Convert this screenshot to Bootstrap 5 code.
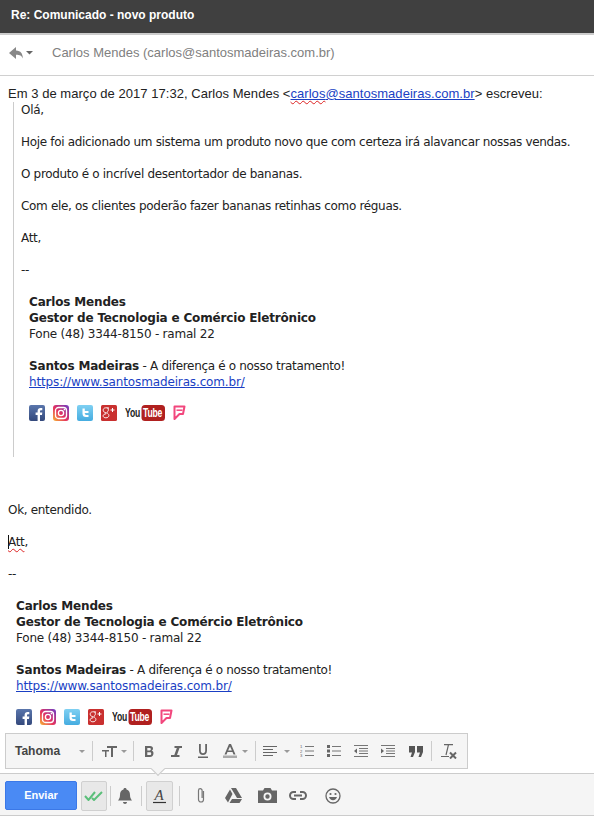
<!DOCTYPE html>
<html lang="pt">
<head>
<meta charset="UTF-8">
<title>Re: Comunicado - novo produto</title>
<link href="https://cdn.jsdelivr.net/npm/bootstrap@5.3.3/dist/css/bootstrap.min.css" rel="stylesheet">
<style>
html, body { height: 100%; }
body { font-family: "Liberation Sans", Arial, sans-serif; overflow: hidden; background: #fff; }
.topo { height: 35px; background: #404040; border-bottom: 2px solid #ccc; color: #fff; font-size: 12px; font-weight: 700; padding-left: 11px; line-height: 30px; }
.resposta { height: 41px; border-bottom: 1px solid #d0d0d0; padding: 0 0 4px 9px; color: #808080; font-size: 13px; }
.resposta .nome-from { margin-left: 15px; }
.corpo { flex: 1 1 auto; min-height: 0; overflow: hidden; font-family: "DejaVu Sans", sans-serif; font-size: 12px; line-height: 16px; color: #222; padding: 9px 0 0 8px; letter-spacing: -.32px; }
.cab-citacao { font-family: "Liberation Sans", Arial, sans-serif; font-size: 13px; letter-spacing: .04px; height: 17px; line-height: 18px; }
.corpo a { color: #1a3fc4; }
.sublinha-erro { text-decoration: underline wavy #d22; text-underline-offset: 2px; text-decoration-thickness: 1px; }
.citacao { margin-left: 5px; border-left: 1px solid #ccc; padding: 0 0 0 7px; height: 355px; margin-bottom: 45px; }
.corpo p { margin: 0 0 16px; }
.assinatura { padding-left: 8px; }
.assinatura b { font-size: 12px; letter-spacing: -.17px; }
.linha-fone { letter-spacing: -.22px; }
.assinatura a { letter-spacing: -.14px; }
.redes { height: 18px; margin-top: 14px; gap: 8px; }
.cursor-texto { border-left: 1px solid #111; margin-right: -1px; }
.barra-formato { position: absolute; left: 5px; top: 733px; width: 463px; height: 36px; background: #f5f5f5; border: 1px solid #ccc; z-index: 3; padding-left: 9px; color: #666; }
.barra-formato .fonte { width: 42px; font-size: 12px; font-weight: 700; color: #444; }
.seta-barra { position: absolute; left: 153px; top: 764px; width: 10px; height: 10px; background: #f5f5f5; border-right: 1px solid #ccc; border-bottom: 1px solid #ccc; transform: rotate(45deg); z-index: 4; }
.barra-envio { height: 43px; flex: none; background: #f5f5f5; border-top: 1px solid #ccc; border-bottom: 1px solid #ccc; padding: 2px 0 0 5px; }
.btn-enviar { width: 72px; height: 29px; padding: 0; background: #4a8af4; border: 1px solid #3b78e7; border-radius: 2px; color: #fff; font-size: 11px; font-weight: 700; }
.alternar { width: 26px; height: 30px; background: #e8e8e8; border: 1px solid #d0d0d0; border-radius: 2px; }
.alternar-largo { width: 27px; }
.sep { width: 1px; height: 20px; background: #ccc; flex: none; }
.icone-fmt { flex: none; display: block; }
.caret-fmt { width: 0; height: 0; border-left: 3.5px solid transparent; border-right: 3.5px solid transparent; border-top: 3.5px solid #999; flex: none; }
.esq-3 { margin-left: 3px; }
.esq-4 { margin-left: 4px; }
.esq-5 { margin-left: 5px; }
.esq-6 { margin-left: 6px; }
.esq-7 { margin-left: 7px; }
.esq-8 { margin-left: 8px; }
.esq-9 { margin-left: 9px; }
.esq-10 { margin-left: 10px; }
.esq-12 { margin-left: 12px; }
.esq-13 { margin-left: 13px; }
.esq-14 { margin-left: 14px; }
.esq-15 { margin-left: 15px; }
.esq-16 { margin-left: 16px; }
.esq-18 { margin-left: 18px; }
.esq-19 { margin-left: 19px; }
.esq-22 { margin-left: 22px; }
.txt-yt { font-family: "Liberation Sans", Arial, sans-serif; font-size: 12px; font-weight: 700; }
.txt-lista { font-family: "Liberation Sans", Arial, sans-serif; font-size: 4.2px; fill: #666; }
</style>
</head>
<body class="d-flex flex-column">

<svg width="0" height="0" class="position-absolute">
  <defs>
    <linearGradient id="gFace" x1="0" y1="0" x2="0" y2="1"><stop offset="0" stop-color="#5a76ac"/><stop offset="1" stop-color="#34497c"/></linearGradient>
    <linearGradient id="gTwit" x1="0" y1="0" x2="0" y2="1"><stop offset="0" stop-color="#7fd0f2"/><stop offset="1" stop-color="#45ace0"/></linearGradient>
    <linearGradient id="gInsta" x1="0" y1="1" x2="1" y2="0"><stop offset="0" stop-color="#f7b733"/><stop offset=".45" stop-color="#e5305f"/><stop offset="1" stop-color="#6a3fc8"/></linearGradient>
    <symbol id="i-face" viewBox="0 0 16 16"><rect width="16" height="16" rx="2" fill="url(#gFace)"/><path d="M11 16V10h2l.3-2.4H11V6.300c0-.7.3-1.100 1.100-1.100h1.200V3c-.4 0-1-.1-1.700-.1-1.800 0-3 1.100-3 3v1.700h-2V10h2v6z" fill="#fff"/></symbol>
    <symbol id="i-insta" viewBox="0 0 16 16"><rect width="16" height="16" rx="3" fill="url(#gInsta)"/><rect x="2.500" y="2.500" width="11" height="11" rx="3" fill="none" stroke="#fff" stroke-width="1.300"/><circle cx="8" cy="8" r="2.600" fill="none" stroke="#fff" stroke-width="1.300"/><circle cx="11.400" cy="4.600" r=".8" fill="#fff"/></symbol>
    <symbol id="i-twit" viewBox="0 0 16 16"><rect width="16" height="16" rx="2" fill="url(#gTwit)"/><path d="M5.500 3.500v5.200c0 2 1.200 3.300 3.400 3.300h2.600v-2H9.300c-1 0-1.500-.5-1.500-1.400V8h3.700V6H7.800V3.500z" fill="#fff"/></symbol>
    <symbol id="i-gplus" viewBox="0 0 16 16"><rect width="16" height="16" rx="1.500" fill="#c9302f"/><path d="M7.600 2.800H4.700C3 2.800 2.200 4 2.200 5.200c0 1.300 1 2.300 2.400 2.300l.4 0c-.2.500-.1.900.2 1.300-1.800.1-3.100.8-3.100 2.100 0 1.200 1.200 1.900 2.800 1.900 1.900 0 3-1.100 3-2.300 0-1.800-1.900-2.100-1.900-3 0-.8 1.400-1.100 1.400-2.600 0-.7-.3-1.200-.7-1.500h.8z" fill="none" stroke="#fff" stroke-width=".9"/><path d="M11.500 3v4M9.500 5h4" stroke="#fff" stroke-width="1"/></symbol>
    <symbol id="i-yt" viewBox="0 0 40 16"><g transform="scale(.72 1)"><text x="0" y="12.500" class="txt-yt" fill="#222">You</text></g><rect x="16.500" y="0" width="23.500" height="16" rx="3.500" fill="#b0201f"/><g transform="scale(.72 1)"><text x="25" y="12.500" class="txt-yt" fill="#fff">Tube</text></g></symbol>
    <symbol id="i-four" viewBox="0 0 13 16"><path d="M1.500 1.500h10L10 9H6.500L1.500 14z" fill="none" stroke="#f2477d" stroke-width="2" stroke-linejoin="round"/><path d="M3.500 5.200h6" stroke="#f2477d" stroke-width="1.500"/></symbol>
  </defs>
</svg>

<div class="topo flex-shrink-0">Re: Comunicado - novo produto</div>

<div class="resposta d-flex align-items-center flex-shrink-0">
  <svg width="28" height="14" viewBox="0 0 28 14"><path d="M0 7l7-6v3.500c5 .3 6.500 3 7 8-1.500-2.700-3-3.700-7-3.700V13z" fill="#888"/><path d="M17 5h7l-3.500 3.500z" fill="#666"/></svg>
  <span class="nome-from">Carlos Mendes (carlos@santosmadeiras.com.br)</span>
</div>

<div class="corpo">
  <div class="cab-citacao">Em 3 de março de 2017 17:32, Carlos Mendes &lt;<a href="#"><span class="sublinha-erro">carlos</span>@santosmadeiras.com.br</a>&gt; escreveu:</div>
  <div class="citacao">
    <p>Olá,</p>
    <p>Hoje foi adicionado um sistema um produto novo que com certeza irá alavancar nossas vendas.</p>
    <p>O produto é o incrível desentortador de bananas.</p>
    <p>Com ele, os clientes poderão fazer bananas retinhas como réguas.</p>
    <p>Att,</p>
    <p>--</p>
    <div class="assinatura">
      <b>Carlos Mendes</b><br>
      <b>Gestor de Tecnologia e Comércio Eletrônico</b><br>
      <span class="linha-fone">Fone (48) 3344-8150 - ramal 22</span><br><br>
      <b>Santos Madeiras</b> - A diferença é o nosso tratamento!<br>
      <a href="#">https://www.santosmadeiras.com.br/</a>
      <div class="redes d-flex align-items-center">
        <svg width="16" height="16"><use href="#i-face"/></svg>
        <svg width="16" height="16"><use href="#i-insta"/></svg>
        <svg width="16" height="16"><use href="#i-twit"/></svg>
        <svg width="16" height="16"><use href="#i-gplus"/></svg>
        <svg width="40" height="16"><use href="#i-yt"/></svg>
        <svg width="13" height="16"><use href="#i-four"/></svg>
      </div>
    </div>
  </div>
  <p>Ok, entendido.</p>
  <p><span class="cursor-texto"></span><span class="sublinha-erro">Att</span>,</p>
  <p>--</p>
  <div class="assinatura">
    <b>Carlos Mendes</b><br>
    <b>Gestor de Tecnologia e Comércio Eletrônico</b><br>
    <span class="linha-fone">Fone (48) 3344-8150 - ramal 22</span><br><br>
    <b>Santos Madeiras</b> - A diferença é o nosso tratamento!<br>
    <a href="#">https://www.santosmadeiras.com.br/</a>
    <div class="redes d-flex align-items-center">
      <svg width="16" height="16"><use href="#i-face"/></svg>
      <svg width="16" height="16"><use href="#i-insta"/></svg>
      <svg width="16" height="16"><use href="#i-twit"/></svg>
      <svg width="16" height="16"><use href="#i-gplus"/></svg>
      <svg width="40" height="16"><use href="#i-yt"/></svg>
      <svg width="13" height="16"><use href="#i-four"/></svg>
    </div>
  </div>
</div>

<div class="barra-formato d-flex align-items-center">
  <span class="fonte">Tahoma</span>
  <span class="caret-fmt esq-22"></span>
  <span class="sep esq-7"></span>
  <svg class="icone-fmt esq-9" width="16" height="11" viewBox="0 0 16 11"><path d="M5 0h10v2h-4v9H9V2H5zM0 4h7v1.500H4.500V11H3V5.500H0z" fill="#666"/></svg>
  <span class="caret-fmt esq-3"></span>
  <span class="sep esq-6"></span>
  <svg class="icone-fmt esq-9" width="12" height="11" viewBox="0 0 12 11"><path fill-rule="evenodd" d="M2 0h5c2 0 3 1 3 2.600 0 .9-.5 1.600-1.300 2 1.100.4 1.800 1.300 1.800 2.600 0 2.300-1.500 3.800-3.500 3.800H2zm2.300 1.900v2.500h2.400c.8 0 1.100-.4 1.100-1.200s-.4-1.300-1.100-1.300zm0 4.400v2.800h2.600c1 0 1.300-.5 1.300-1.400s-.5-1.400-1.400-1.400z" fill="#666"/></svg>
  <svg class="icone-fmt esq-15" width="12" height="11" viewBox="0 0 12 11"><path d="M4.500 0H12v2H9.500L7 9h2.500v2H1V9h3.300l2.500-7H4.500z" fill="#666"/></svg>
  <svg class="icone-fmt esq-15" width="12" height="14" viewBox="0 0 12 14"><path d="M2 0v6.500c0 3 1.600 4.500 4 4.500s4-1.500 4-4.500V0H8.200v6.500c0 1.800-.8 2.700-2.200 2.700s-2.200-.9-2.200-2.700V0zM1 12.500h10V14H1z" fill="#666"/></svg>
  <svg class="icone-fmt esq-14" width="14" height="14" viewBox="0 0 14 14"><path fill-rule="evenodd" d="M6 0h2l4.500 10.500h-2l-1-2.500H4.500l-1 2.500h-2zm1 2.500L5.100 6.500h3.800z" fill="#666"/><rect y="11.500" width="14" height="2.500" fill="#aaa"/></svg>
  <span class="caret-fmt esq-5"></span>
  <span class="sep esq-7"></span>
  <svg class="icone-fmt esq-7" width="14" height="11" viewBox="0 0 14 11"><path d="M0 .5h14M0 3.500h10M0 6.500h14M0 9.500h10" stroke="#666" stroke-width="1"/></svg>
  <span class="caret-fmt esq-7"></span>
  <svg class="icone-fmt esq-10" width="14" height="14" viewBox="0 0 14 14"><text x="0" y="4" class="txt-lista">1</text><text x="0" y="8.700" class="txt-lista">2</text><text x="0" y="13.400" class="txt-lista">3</text><path d="M5 2.500h9M5 7h9M5 11.500h9" stroke="#777" stroke-width="1"/></svg>
  <svg class="icone-fmt esq-13" width="14" height="12" viewBox="0 0 14 12"><rect width="3" height="3" fill="#666"/><rect y="4.500" width="3" height="3" fill="#666"/><rect y="9" width="3" height="3" fill="#666"/><path d="M5 1.500h9M5 6h9M5 10.500h9" stroke="#777" stroke-width="1"/></svg>
  <svg class="icone-fmt esq-13" width="14" height="12" viewBox="0 0 14 12"><path d="M0 .5h14M5 3.500h9M5 6h9M5 8.500h9M0 11.500h14" stroke="#777" stroke-width="1"/><path d="M3 3.500v5L0 6z" fill="#666"/></svg>
  <svg class="icone-fmt esq-13" width="14" height="12" viewBox="0 0 14 12"><path d="M0 .5h14M5 3.500h9M5 6h9M5 8.500h9M0 11.500h14" stroke="#777" stroke-width="1"/><path d="M0 3.500v5L3 6z" fill="#666"/></svg>
  <svg class="icone-fmt esq-14" width="14" height="11" viewBox="0 0 14 11"><path d="M0 0h6v6L4 11H1.500L3 6.500H0zM8 0h6v6l-2 5H9.500L11 6.500H8z" fill="#555"/></svg>
  <span class="sep esq-8"></span>
  <svg class="icone-fmt esq-9" width="16" height="15" viewBox="0 0 16 15"><path d="M3 .7h9M7.500.7L5 11M0 12.500h8" stroke="#666" stroke-width="1.200" fill="none"/><path d="M9 8.500l6 6M15 8.500l-6 6" stroke="#666" stroke-width="2"/></svg>
</div>
<span class="seta-barra"></span>

<div class="barra-envio d-flex align-items-center">
  <button type="button" class="btn btn-enviar">Enviar</button>
  <span class="alternar d-flex align-items-center justify-content-center esq-4">
    <svg width="20" height="10" viewBox="0 0 20 10"><path d="M1 5l3.500 4L11 1M8 7l2 2 8-8" fill="none" stroke="#5bbf7a" stroke-width="2"/></svg>
  </span>
  <span class="sep esq-3"></span>
  <svg class="icone-fmt esq-7" width="14" height="16" viewBox="0 0 14 16"><path d="M7 0c1 0 1.500.6 1.500 1.400C11 2 12 4 12 7c0 3 1 4 2 5.500H0C1 11 2 10 2 7c0-3 1-5 3.500-5.600C5.500.6 6 0 7 0zM5 14h4c0 1-1 2-2 2s-2-1-2-2z" fill="#666"/></svg>
  <span class="sep esq-9"></span>
  <span class="alternar alternar-largo d-flex align-items-center justify-content-center esq-4">
    <svg width="15" height="16" viewBox="0 0 15 16"><text x="2.500" y="12" font-family="Liberation Serif" font-style="italic" font-size="15" fill="#444">A</text><path d="M1 14.500h13" stroke="#333" stroke-width="1.200"/></svg>
  </span>
  <span class="sep esq-6"></span>
  <svg class="icone-fmt esq-16" width="10" height="17" viewBox="0 0 10 17"><path d="M7.500 4v8.500a2.500 2.500 0 0 1-5 0V3.500a1.800 1.800 0 0 1 3.600 0V11" fill="none" stroke="#777" stroke-width="1.200"/></svg>
  <svg class="icone-fmt esq-19" width="17" height="15" viewBox="0 0 17 15"><path d="M6 0h5l6 10h-5zM5 1.500L7.500 6 3 14.500 0 10zM4.500 15h10l2.500-4H7z" fill="#666"/></svg>
  <svg class="icone-fmt esq-16" width="19" height="15" viewBox="0 0 19 15"><path fill-rule="evenodd" d="M0 2.500h5L6.500 0h6L14 2.500h5V15H0zM9.500 4.500a4 4 0 1 0 0 8 4 4 0 0 0 0-8zm0 1.800a2.200 2.200 0 1 1 0 4.400 2.200 2.200 0 0 1 0-4.400z" fill="#666"/></svg>
  <svg class="icone-fmt esq-12" width="18" height="9" viewBox="0 0 18 9"><path d="M7 1H4.500a3.500 3.500 0 0 0 0 7H7M11 1h2.500a3.500 3.500 0 0 1 0 7H11M5 4.500h8" fill="none" stroke="#666" stroke-width="2"/></svg>
  <svg class="icone-fmt esq-18" width="16" height="16" viewBox="0 0 16 16"><circle cx="8" cy="8" r="7" fill="none" stroke="#666" stroke-width="1.300"/><circle cx="5.500" cy="6" r="1.100" fill="#666"/><circle cx="10.500" cy="6" r="1.100" fill="#666"/><path d="M4 9h8c-.5 2-2 3.200-4 3.200S4.500 11 4 9z" fill="#666"/></svg>
</div>

<script src="https://cdn.jsdelivr.net/npm/bootstrap@5.3.3/dist/js/bootstrap.bundle.min.js"></script>
</body>
</html>
